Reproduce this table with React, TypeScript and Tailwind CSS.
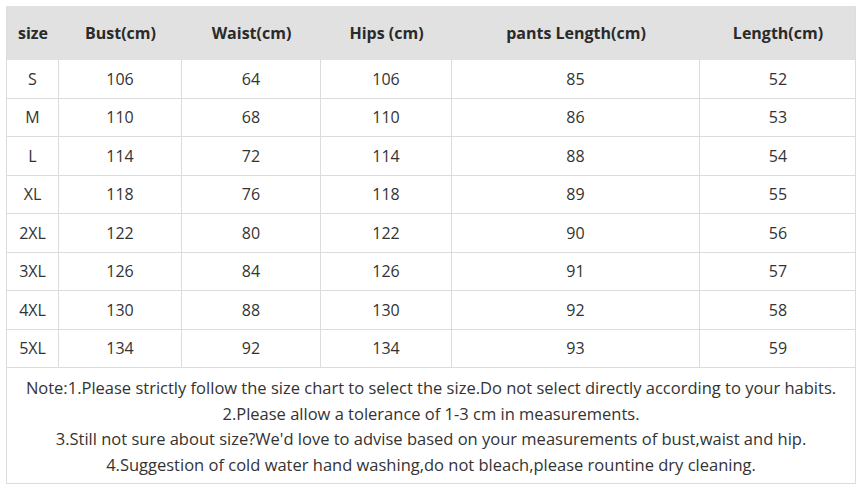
import * as React from 'react';

const headers = ['size', 'Bust(cm)', 'Waist(cm)', 'Hips (cm)', 'pants Length(cm)', 'Length(cm)'];

const rows = [
  ['S', '106', '64', '106', '85', '52'],
  ['M', '110', '68', '110', '86', '53'],
  ['L', '114', '72', '114', '88', '54'],
  ['XL', '118', '76', '118', '89', '55'],
  ['2XL', '122', '80', '122', '90', '56'],
  ['3XL', '126', '84', '126', '91', '57'],
  ['4XL', '130', '88', '130', '92', '58'],
  ['5XL', '134', '92', '134', '93', '59'],
];

const notes = [
  'Note:1.Please strictly follow the size chart to select the size.Do not select directly according to your habits.',
  '2.Please allow a tolerance of 1-3 cm in measurements.',
  "3.Still not sure about size?We'd love to advise based on your measurements of bust,waist and hip.",
  '4.Suggestion of cold water hand washing,do not bleach,please rountine dry cleaning.',
];

const cols = 'grid grid-cols-[52px_123px_139px_131px_248px_156px]';

export default function App() {
  return (
    <div className="w-[863px] h-[493px] bg-white pt-[6px] pl-[6px] text-[#333333] font-['Open_Sans',sans-serif]">
      <div className="w-[850px] border-r border-b border-l border-[#dcdcdc]">
        <div className={`${cols} h-[54px] bg-[#e1e1e1] font-bold text-[16px] text-[#2a2a2a]`}>
          {headers.map((h) => (
            <div key={h} className="flex items-center justify-center">{h}</div>
          ))}
        </div>
        {rows.map((r) => (
          <div key={r[0]} className={`${cols} h-[38.5px] border-b border-[#dcdcdc] text-[16px]`}>
            {r.map((c, i) => (
              <div key={i} className={`flex items-center justify-center ${i < 5 ? 'border-r border-[#dcdcdc]' : ''}`}>{c}</div>
            ))}
          </div>
        ))}
        <div className="h-[115px] flex flex-col items-center justify-center text-[16.5px] leading-[25.5px] pt-[1px]">
          {notes.map((n) => (
            <div key={n}>{n}</div>
          ))}
        </div>
      </div>
    </div>
  );
}
